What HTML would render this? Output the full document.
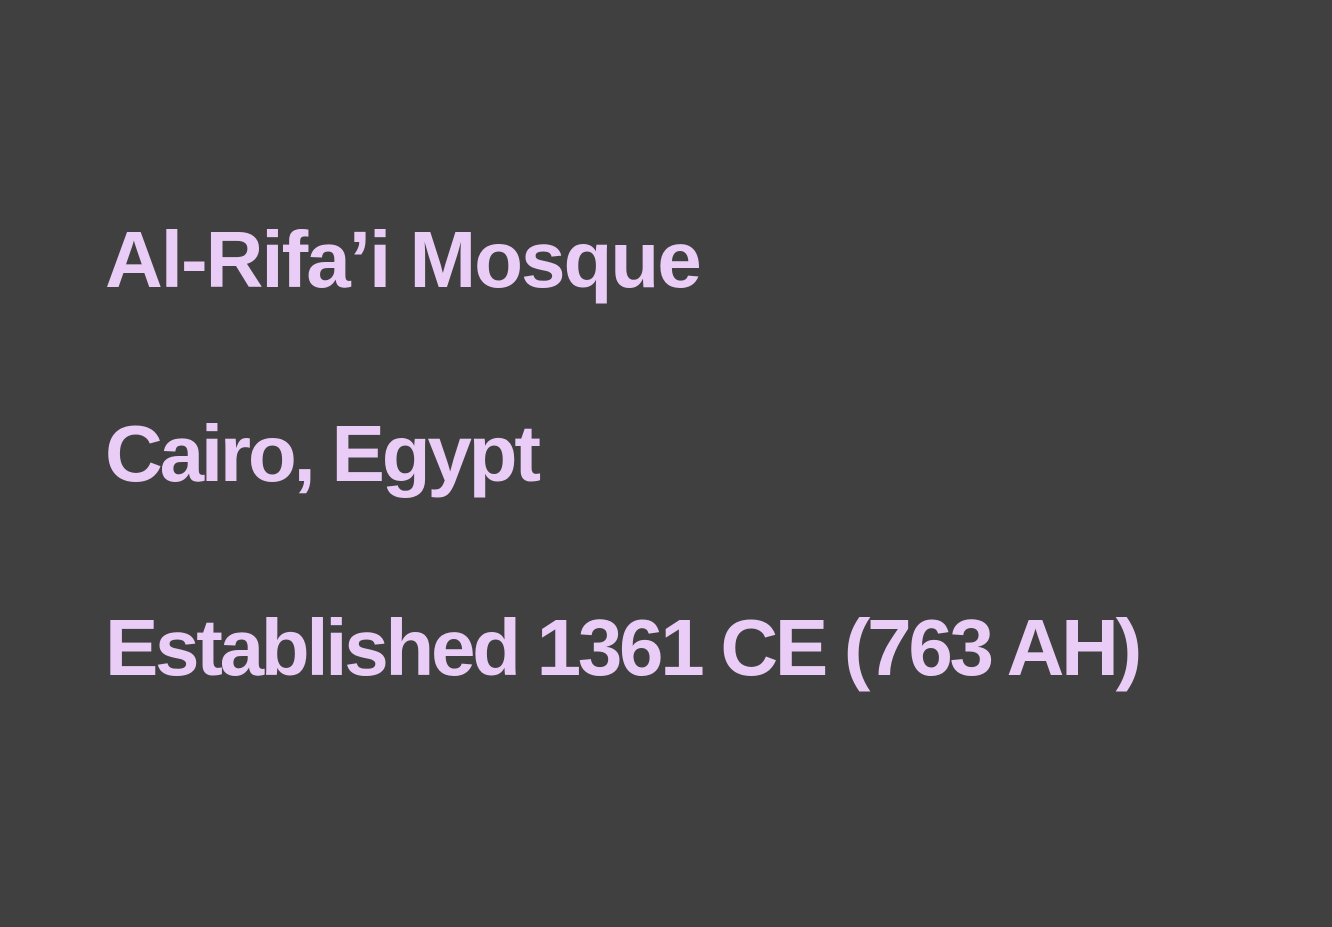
<!DOCTYPE html>
<html>
<head>
<meta charset="utf-8">
<style>
html,body{margin:0;padding:0;}
body{width:1332px;height:927px;background:#404040;position:relative;overflow:hidden;}
.t{position:absolute;left:105px;font-family:"Liberation Sans","DejaVu Sans",sans-serif;font-weight:bold;font-size:80px;line-height:80px;color:#e9cdf6;letter-spacing:-2px;white-space:nowrap;}
</style>
</head>
<body>
<div class="t" style="top:220px">Al-Rifa’i Mosque</div>
<div class="t" style="top:414px;letter-spacing:-3.2px">Cairo, Egypt</div>
<div class="t" style="top:608px;letter-spacing:-3.3px">Established 1361 CE (763 AH)</div>
</body>
</html>
